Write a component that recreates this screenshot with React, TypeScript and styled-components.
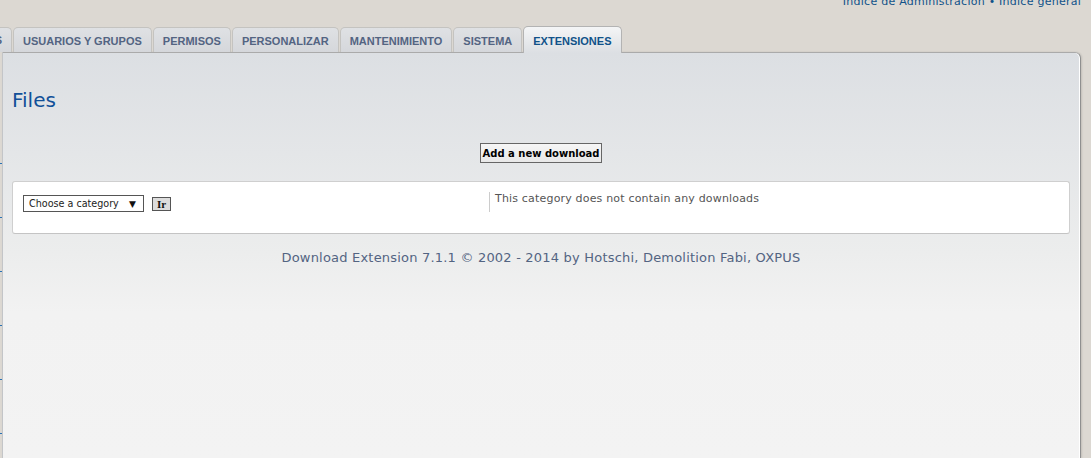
import React from "react";
import styled, { createGlobalStyle } from "styled-components";

const Global = createGlobalStyle`
  html, body { margin: 0; padding: 0; }
  body {
    background: #dcd8d2;
    width: 1091px;
    height: 458px;
    overflow: hidden;
    font-family: "DejaVu Sans", Verdana, sans-serif;
  }
`;

const Page = styled.div`
  display: flex;
  flex-direction: column;
  width: 1091px;
  height: 458px;
  overflow: hidden;
`;

const Header = styled.div`
  height: 26px;
  display: flex;
  justify-content: flex-end;
  align-items: flex-start;
  padding-right: 10px;
`;

const TopLinks = styled.div`
  margin-top: -5px;
  font-size: 11px;
  letter-spacing: 0.25px;
  line-height: 14px;
  color: #105289;
  white-space: nowrap;
`;

const TabsRow = styled.div`
  height: 26px;
  display: flex;
  align-items: flex-end;
  gap: 1px;
`;

const Tab = styled.div<{ $active?: boolean; $clip?: boolean }>`
  position: relative;
  z-index: ${(p) => (p.$active ? 2 : 1)};
  box-sizing: border-box;
  height: ${(p) => (p.$active ? "27px" : "25px")};
  margin-bottom: ${(p) => (p.$active ? "-1px" : "0")};
  display: flex;
  align-items: center;
  justify-content: ${(p) => (p.$clip ? "flex-end" : "center")};
  width: ${(p) => (p.$clip ? "12px" : "auto")};
  overflow: hidden;
  padding: ${(p) => (p.$clip ? "0" : "1px 9px 0")};
  font-family: "Liberation Sans", Arial, sans-serif;
  font-weight: bold;
  font-size: 11px;
  white-space: nowrap;
  color: ${(p) => (p.$active ? "#105289" : "#536482")};
  background: ${(p) =>
    p.$active
      ? "linear-gradient(to bottom, #f4f5f6 0%, #dcdfe3 100%)"
      : "linear-gradient(to bottom, #dfe1e4 0%, #d5d7db 100%)"};
  border: 1px solid ${(p) => (p.$active ? "#b3b3b3" : "#c4c3c0")};
  border-bottom: none;
  border-left-width: ${(p) => (p.$clip ? "0" : "1px")};
  border-radius: ${(p) => (p.$clip ? "0 5px 0 0" : "5px 5px 0 0")};
`;

const ClipText = styled.span`
  padding-right: 9px;
`;

const Body = styled.div`
  flex: 1;
  display: flex;
  min-height: 0;
`;

const Sidebar = styled.div`
  width: 2px;
  display: flex;
  flex-direction: column;
  padding-top: 58px;
`;

const SideItem = styled.div`
  height: 53px;
  flex-shrink: 0;
  border-bottom: 1px solid #2a73b5;
`;

const Panel = styled.div`
  flex: 1;
  margin-right: 10px;
  display: flex;
  flex-direction: column;
  align-items: stretch;
  padding: 0 10px 0 9px;
  background: linear-gradient(to bottom, #dcdfe3 0px, #eceded 200px, #f2f2f2 260px, #f3f3f3 100%);
  border-top: 1px solid #aaaaaa;
  border-left: 1px solid #c3c5c8;
  border-right: 1px solid #8f8f8f;
  border-top-right-radius: 6px;
  box-shadow: inset -1px 0 0 #ffffff, 1px 0 2px rgba(0, 0, 0, 0.12);
`;

const Title = styled.h1`
  margin: 35px 0 0;
  font-family: "DejaVu Sans", "Trebuchet MS", sans-serif;
  font-weight: normal;
  font-size: 20px;
  line-height: 24px;
  color: #115098;
`;

const Actions = styled.div`
  display: flex;
  justify-content: center;
  margin-top: 31px;
`;

const Button = styled.button`
  box-sizing: border-box;
  height: 20px;
  padding: 0 2px;
  font-family: "DejaVu Sans", Verdana, sans-serif;
  font-weight: bold;
  font-size: 10px;
  color: #000;
  background: linear-gradient(to bottom, #f6f6f6, #e8e8e8);
  border: 1px solid #666;
  border-radius: 0;
  cursor: pointer;
`;

const Box = styled.div`
  margin-top: 18px;
  box-sizing: border-box;
  height: 53px;
  padding: 10px 10px 0;
  display: grid;
  grid-template-columns: 466px 1fr;
  align-items: start;
  background: #fff;
  border: 1px solid #cfcfcf;
  border-bottom-color: #c4c4c4;
  border-radius: 3px;
`;

const LeftCell = styled.div`
  display: flex;
  align-items: flex-start;
  gap: 8px;
  padding-top: 3px;
`;

const FakeSelect = styled.div`
  box-sizing: border-box;
  width: 121px;
  height: 17px;
  display: flex;
  align-items: center;
  justify-content: space-between;
  padding: 0 7px 0 5px;
  border: 1px solid #555;
  background: #fff;
  font-size: 9.6px;
  color: #222;
`;

const Arrow = styled.span`
  font-size: 9px;
  color: #111;
`;

const GoButton = styled.button`
  box-sizing: border-box;
  margin-top: 2px;
  width: 19px;
  height: 14px;
  padding: 0;
  display: flex;
  align-items: center;
  justify-content: center;
  font-family: "Liberation Serif", "Times New Roman", serif;
  font-weight: bold;
  font-size: 11px;
  color: #111;
  background: #dddddd;
  border: 1px solid #555;
  border-radius: 0;
`;

const RightCell = styled.div`
  min-height: 20px;
  border-left: 1px solid #cccccc;
  padding-left: 5px;
  font-size: 11px;
  letter-spacing: 0.18px;
  line-height: 14px;
  color: #555;
`;

const Footer = styled.div`
  margin-top: 15px;
  text-align: center;
  font-size: 13px;
  letter-spacing: 0.2px;
  line-height: 17px;
  color: #536482;
`;

const tabs = [
  "USUARIOS Y GRUPOS",
  "PERMISOS",
  "PERSONALIZAR",
  "MANTENIMIENTO",
  "SISTEMA",
];

export default function App() {
  return (
    <Page>
      <Global />
      <Header>
        <TopLinks>Índice de Administración • Índice general</TopLinks>
      </Header>
      <TabsRow>
        <Tab $clip>
          <ClipText>MENSAJES</ClipText>
        </Tab>
        {tabs.map((t) => (
          <Tab key={t}>{t}</Tab>
        ))}
        <Tab $active>EXTENSIONES</Tab>
      </TabsRow>
      <Body>
        <Sidebar>
          {Array.from({ length: 6 }).map((_, i) => (
            <SideItem key={i} />
          ))}
        </Sidebar>
        <Panel>
          <Title>Files</Title>
          <Actions>
            <Button>Add a new download</Button>
          </Actions>
          <Box>
            <LeftCell>
              <FakeSelect>
                <span>Choose a category</span>
                <Arrow>▼</Arrow>
              </FakeSelect>
              <GoButton>Ir</GoButton>
            </LeftCell>
            <RightCell>This category does not contain any downloads</RightCell>
          </Box>
          <Footer>
            Download Extension 7.1.1 © 2002 - 2014 by Hotschi, Demolition Fabi, OXPUS
          </Footer>
        </Panel>
      </Body>
    </Page>
  );
}
